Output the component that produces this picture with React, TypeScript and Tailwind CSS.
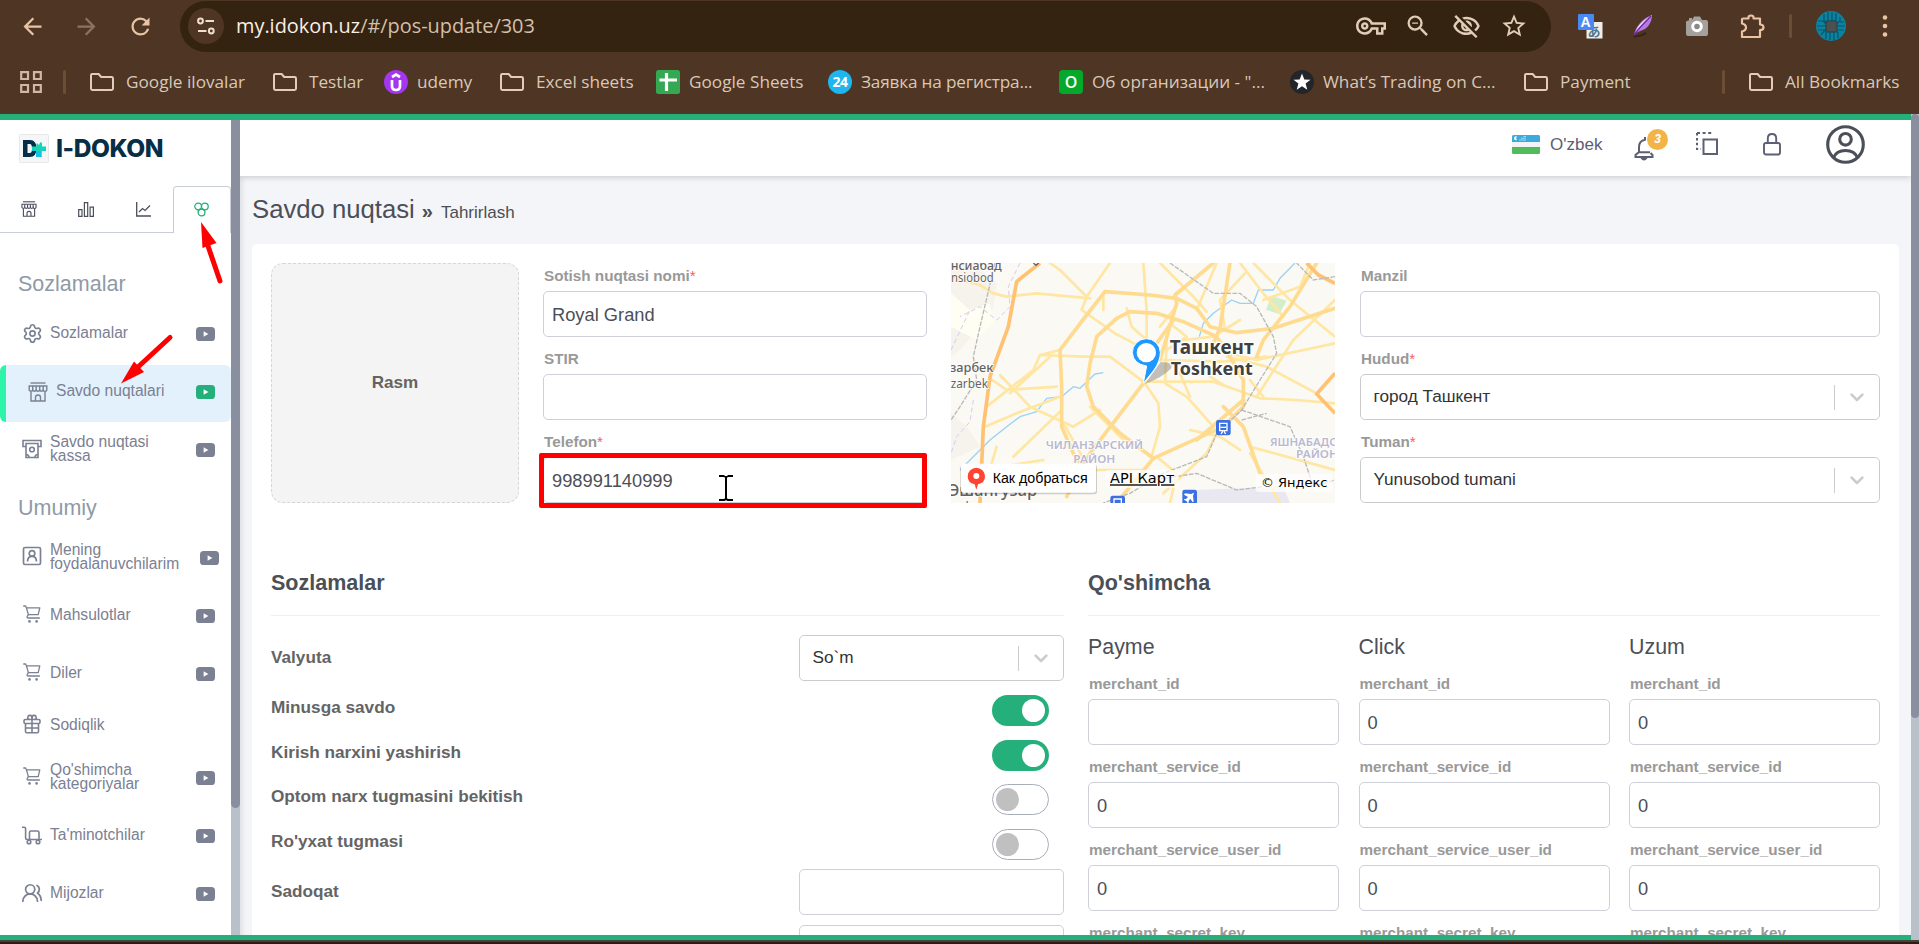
import type { ReactNode } from "react";
import { MdOutlineExtension, MdOutlineVpnKey, MdOutlineZoomOut, MdStarBorder, MdArrowBack, MdArrowForward, MdRefresh, MdOutlineVisibilityOff } from "react-icons/md";
import { Settings, UsersRound } from "lucide-react";

/* ---------- small drawings ---------- */

function StoreIcon({ className }: { className: string }) {
  return (
    <svg viewBox="0 0 20 20" fill="none" stroke="currentColor" strokeWidth="1.4" className={className}>
      <path d="M2.5 1H17.5" />
      <path d="M1.2 4H18.8V8.2a2 2 0 0 1-3.6 0a2 2 0 0 1-3.5 0a2 2 0 0 1-3.5 0a2 2 0 0 1-3.5 0a2 2 0 0 1-3.5 0Z" />
      <path d="M4.7 4v4.2M8.2 4v4.2M11.7 4v4.2M15.2 4v4.2" />
      <path d="M3 10v9H17v-9M7.5 19v-3.5a2.5 2.5 0 0 1 5 0V19" />
    </svg>
  );
}

function AtmIcon({ className }: { className: string }) {
  return (
    <svg viewBox="0 0 20 20" fill="none" stroke="currentColor" strokeWidth="1.6" className={className}>
      <path d="M4 7.5H1V1.5H19V7.5H16" />
      <path d="M4 4.5H16V18.5H4Z" />
      <circle cx="10" cy="10.5" r="2.3" />
      <path d="M4 15.5a3 3 0 0 1 3 3M16 15.5a3 3 0 0 0-3 3" />
    </svg>
  );
}

function CartIcon() {
  return (
    <svg viewBox="0 0 18 18" fill="none" stroke="currentColor" strokeWidth="1.3" strokeLinecap="round" strokeLinejoin="round" className="size-[18px] -translate-y-[2px]">
      <path d="M.7 1H2.6L3.4 2.8H16.8L15.2 9.6H5.4" />
      <path d="M3.4 2.800L5.400 9.600L4.200 11.400Q3.800 13 5.200 13H16.400" />
      <circle cx="6.500" cy="16.400" r="1.300" fill="currentColor" stroke="none" />
      <circle cx="13.600" cy="16.400" r="1.300" fill="currentColor" stroke="none" />
    </svg>
  );
}

function ContactIcon() {
  return (
    <svg viewBox="0 0 20 20" fill="none" stroke="currentColor" strokeWidth="1.700" className="size-5 -translate-y-[2px]">
      <rect x="1.500" y="1.500" width="17" height="17" rx="1.500" />
      <circle cx="10" cy="7.400" r="2.800" />
      <path d="M5.500 15.500Q5.700 10.400 10 10.400Q14.300 10.400 14.500 15.500" />
    </svg>
  );
}

function GiftIcon() {
  return (
    <svg viewBox="0 0 18 20" fill="none" stroke="currentColor" strokeWidth="1.600" strokeLinejoin="round" className="h-5 w-[18px] -translate-y-[2px]">
      <rect x="1" y="5.500" width="16" height="4" rx="1.200" />
      <path d="M2.500 9.500V17.500Q2.500 18.800 3.800 18.800H14.200Q15.500 18.800 15.500 17.500V9.500M9 3V18.800M2.500 14H15.500" />
      <path d="M9 5.500V3.500A2.100 2.100 0 1 0 6.400 5.500M9 3.500A2.100 2.100 0 1 1 11.600 5.500" />
    </svg>
  );
}

function TrolleyIcon() {
  return (
    <svg viewBox="0 0 20 19" fill="none" stroke="currentColor" strokeWidth="1.600" strokeLinejoin="round" className="h-[19px] w-5 -translate-y-[1px]">
      <path d="M0 1.200H2.200Q3.600 1.200 3.600 2.600V12Q3.600 13.500 5 13.500H20" />
      <path d="M7.500 13V6.500Q7.500 5 9 5H15.500Q17 5 17 6.500V13" />
      <circle cx="7" cy="16" r="1.800" />
      <circle cx="16" cy="16" r="1.800" />
    </svg>
  );
}

function PlayBadge({ active = false }: { active?: boolean }) {
  return (
    <svg viewBox="0 0 19 14" className={active ? "h-[14px] w-[19px] text-[#25b07b]" : "h-[14px] w-[19px] text-[#7b8092]"}>
      <rect width="19" height="14" rx="3.6" fill="currentColor" />
      <path d="M7.6 4.2L12.4 7L7.6 9.8Z" fill="#fff" />
    </svg>
  );
}

function FolderIcon() {
  return (
    <svg viewBox="0 0 24 18" fill="none" stroke="#e2cdb9" strokeWidth="2" strokeLinejoin="round" className="h-[18px] w-6 shrink-0">
      <path d="M1 2.2Q1 1 2.2 1H8.6L11.2 4H21.6Q23 4 23 5.4V15.6Q23 17 21.6 17H2.4Q1 17 1 15.6Z" />
    </svg>
  );
}

function Bookmark({ icon, label, box }: { icon: ReactNode; label: string; box: string }) {
  return (
    <div className={`flex shrink-0 items-center ${box}`}>
      {icon}
      <span className="whitespace-nowrap">{label}</span>
    </div>
  );
}

/* ---------- browser chrome ---------- */

function Browser() {
  return (
    <header className="h-[114px] shrink-0 border-b border-[#3f3c30] bg-[#4e3524] font-['Open_Sans','Noto_Sans',sans-serif]">
      <div className="flex h-[53px] items-center pb-px text-[#e9c4a4]">
        <MdArrowBack className="ml-[19px] size-[27px]" />
        <MdArrowForward className="ml-[27px] size-[27px] text-[#8d735f]" />
        <MdRefresh className="ml-[27px] size-[27px]" />
        <div className="ml-[26px] flex h-[51px] w-[1371px] items-center rounded-full bg-[#352311] pl-2 text-[#e2cdb9]">
          <div className="flex size-9 items-center justify-center rounded-full bg-[#4e3524]">
            <svg viewBox="0 0 18 18" fill="none" stroke="#f0dfd0" strokeWidth="2" className="size-[18px]">
              <circle cx="3.5" cy="4" r="2.4" />
              <path d="M8.5 4H17M1 14H9.5" />
              <circle cx="14.3" cy="14" r="2.4" />
            </svg>
          </div>
          <div className="ml-3 w-[1120px] whitespace-nowrap text-[19.900px] text-[#d3bfab]">
            <span className="text-[#fbeee2]">my.idokon.uz</span>/#/pos-update/303
          </div>
          <MdOutlineVpnKey className="size-[30px]" />
          <MdOutlineZoomOut className="ml-[18px] size-[28px]" />
          <MdOutlineVisibilityOff className="ml-[20px] size-[29px]" />
          <MdStarBorder className="ml-[19px] size-[28px]" />
        </div>
        <svg viewBox="0 0 25 25" className="ml-[27px] size-[25px]">
          <rect x="8.500" y="8" width="16" height="16.500" fill="#f1eee9" />
          <text x="9.500" y="21.500" fontSize="13" fill="#4d7790" fontWeight="700" fontFamily="Noto Sans CJK JP">あ</text>
          <rect width="16" height="16" rx="1" fill="#4a89f3" />
          <text x="2.600" y="13" fontSize="14" fontWeight="700" fill="#fff" fontFamily="Liberation Sans">A</text>
        </svg>
        <svg viewBox="0 0 21 24" className="ml-[30px] h-6 w-[21px]">
          <path d="M1 22Q2 23 9 21L13 19" stroke="#382418" strokeWidth="2" fill="none" />
          <path d="M1 21C2 14 8 5 19 1C19 8 15 15 7 17Q4 18 1 21Z" fill="#b77be0" />
          <path d="M1 21C5 16 11 9 19 1C14 4 5 10 3 17Z" fill="#efdcfa" />
          <path d="M1 21C5 15 10 10 18 2" stroke="#7125a5" strokeWidth="1.500" fill="none" />
        </svg>
        <svg viewBox="0 0 22 20" className="ml-[32px] h-5 w-[22px]">
          <path d="M2.500 4.500H3V2H6V4L8 0.500H14L16 4H20Q22 4 22 6V18Q22 20 20 20H2Q0 20 0 18V6Q0 4.500 2.500 4.500Z" fill="#a3a09d" />
          <circle cx="11" cy="10.500" r="4.300" fill="#8a8886" stroke="#fff" strokeWidth="3" />
        </svg>
        <svg viewBox="0 0 25 25" fill="none" stroke="currentColor" strokeWidth="2.200" strokeLinejoin="round" className="ml-[32px] size-[25px]">
          <path d="M3 4.500H8.500Q8 1.500 11 1.500Q14 1.500 13.500 4.500H20V10.500Q23.500 10.500 23.500 13.200Q23.500 16 20 16V23H2V17.500Q6 16.500 6 13.500Q6 10.500 2 9.500V5.500Q2 4.500 3 4.500Z" />
        </svg>
        <div className="ml-[24px] h-6 w-[3px] rounded bg-[#6c4e36]" />
        <svg viewBox="0 0 30 30" className="ml-[24px] size-[30px]">
          <circle cx="15" cy="15" r="15" fill="#0b82a0" />
          <g stroke="#07566b" strokeWidth="1.200" fill="none">
            <path d="M8 3V9L11 12M12 1V10M16 1V10M20 2V8L18 11M24 6V10L20 13M2 10H7L10 13M1 15H10M2 19H9M5 24L10 18M10 28V21M14 29V20M18 29V22L17 20M22 27V22L19 19M28 19H20M29 15H20M28 11H24" />
          </g>
          <rect x="10" y="10" width="11" height="11" rx="1" fill="#4c5051" stroke="#283f47" />
        </svg>
        <svg viewBox="0 0 6 24" fill="currentColor" className="ml-[36px] h-6 w-[6px]">
          <circle cx="3" cy="3.500" r="2.300" />
          <circle cx="3" cy="12" r="2.300" />
          <circle cx="3" cy="20.500" r="2.300" />
        </svg>
      </div>
      <div className="flex h-[58px] items-center pl-5 text-[17.200px] text-[#dac8b6]">
        <svg viewBox="0 0 22 22" fill="none" stroke="#cfb9a6" strokeWidth="2.200" className="mr-[21px] size-[22px]">
          <path d="M1.200 1.200H8V8H1.200ZM14 1.200H20.800V8H14ZM1.200 14H8V20.800H1.200ZM14 14H20.800V20.800H14Z" />
        </svg>
        <div className="mr-6 h-6 w-[3px] rounded bg-[#6c4e36]" />
        <Bookmark icon={<FolderIcon />} label="Google ilovalar" box="w-[183px] gap-3" />
        <Bookmark icon={<FolderIcon />} label="Testlar" box="w-[111px] gap-3" />
        <Bookmark
          icon={
            <svg viewBox="0 0 24 24" className="size-6">
              <circle cx="12" cy="12" r="12" fill="#a435f0" />
              <path d="M8 7L12 4.500L16 7M8 10V16Q8 20 12 20Q16 20 16 16V10" fill="none" stroke="#fff" strokeWidth="2.700" />
            </svg>
          }
          label="udemy"
          box="w-[116px] gap-[9px]"
        />
        <Bookmark icon={<FolderIcon />} label="Excel sheets" box="w-[156px] gap-3" />
        <Bookmark
          icon={
            <svg viewBox="0 0 24 24" className="size-6">
              <rect width="24" height="24" rx="2.500" fill="#34a853" />
              <path d="M3.500 10H21M10.500 3V21" stroke="#fff" strokeWidth="3.200" />
            </svg>
          }
          label="Google Sheets"
          box="w-[172px] gap-[9px]"
        />
        <Bookmark
          icon={<span className="flex size-6 items-center justify-center rounded-full bg-[#1fb6ef] text-[14px] font-bold tracking-[-0.5px] text-white">24</span>}
          label="Заявка на регистра..."
          box="w-[231px] gap-[9px] tracking-[-0.18px]"
        />
        <Bookmark
          icon={<span className="flex size-6 items-center justify-center rounded-[4px] bg-[#04a82a] text-[16px] font-semibold text-white">O</span>}
          label={'Об организации - "...'}
          box="w-[231px] gap-[9px]"
        />
        <Bookmark
          icon={
            <svg viewBox="0 0 24 24" className="size-6">
              <circle cx="12" cy="12" r="12" fill="#22252a" />
              <path d="M12 3.500L14.300 9.500L20.500 9.700L15.600 13.500L17.300 19.700L12 16.200L6.700 19.700L8.400 13.500L3.500 9.700L9.700 9.500Z" fill="#fff" />
            </svg>
          }
          label="What’s Trading on C..."
          box="w-[234px] gap-[9px]"
        />
        <Bookmark icon={<FolderIcon />} label="Payment" box="w-[198px] gap-3" />
        <div className="mr-6 h-6 w-[3px] rounded bg-[#6c4e36]" />
        <Bookmark icon={<FolderIcon />} label="All Bookmarks" box="gap-3" />
      </div>
    </header>
  );
}

/* ---------- sidebar ---------- */

function NavItem({ icon, label, gap, play = true, wide = false }: { icon: ReactNode; label: ReactNode; gap: string; play?: boolean; wide?: boolean }) {
  return (
    <div className={`flex h-11 shrink-0 items-center pl-[22px] text-[#7b8092] ${gap}`}>
      <span className="flex w-[20px] shrink-0 justify-center">{icon}</span>
      <span className={wide ? "ml-2 w-[150px] -translate-y-px leading-[14px]" : "ml-2 w-[146px] -translate-y-px leading-[14px]"}>{label}</span>
      {play && <PlayBadge />}
    </div>
  );
}

function Sidebar() {
  return (
    <aside className="flex w-[231px] shrink-0 flex-col bg-white text-[15.600px]">
      <div className="flex h-[66px] shrink-0 items-center pb-[10px] pl-[19px]">
        <svg viewBox="0 0 30 29" className="h-[29px] w-[30px]">
          <rect x="0.500" y="0.500" width="29" height="28" rx="1" fill="#f5f6f7" stroke="#e6e8ea" />
          <path d="M4 6H11Q17.500 6 17.500 14.500Q17.500 23 11 23H4ZM8.500 10V19H11Q13 19 13 14.500Q13 10 11 10Z" fill="#062e46" fillRule="evenodd" />
          <path d="M17.500 9.500H18.500L20 11L21.500 8L23 9V12.500H27V17H22.500V23H17V17H13V12.500H17.500Z" fill="#13d6b6" />
          <path d="M13 15L17 17H22.500V23H17V17H13Z" fill="#18bfe0" />
        </svg>
        <span className="ml-[7px] font-['Inter',sans-serif] text-[24.500px] font-extrabold tracking-[-0.4px] text-[#062e46]">I-DOKON</span>
      </div>
      <div className="flex h-[47px] shrink-0 text-[#4b4f5c]">
        <div className="flex flex-1 items-center border-b border-[#c9cdd6] pl-[21px]">
          <StoreIcon className="size-[16px]" />
          <svg viewBox="0 0 16 15" fill="none" stroke="currentColor" strokeWidth="1.200" className="ml-[41px] h-[15px] w-4">
            <path d="M.7 7.700H4V14.400H.7ZM6.400 .6H9.700V14.400H6.400ZM12.100 5.200H15.400V14.400H12.100Z" />
          </svg>
          <svg viewBox="0 0 15 15" fill="none" stroke="currentColor" strokeWidth="1.300" className="ml-[42px] size-[15px]">
            <path d="M.7 0V14H15M3 10L6.500 6.500L9 8.500L14 3.500" />
          </svg>
        </div>
        <div className="flex w-[58px] items-center justify-center rounded-t-[4px] border border-b-0 border-[#c9cdd6] pr-[2px] pb-[2px]">
          <svg viewBox="0 0 15 15" fill="none" stroke="#25b07b" strokeWidth="1.300" className="size-[15px]">
            <circle cx="4.200" cy="4.500" r="3.400" />
            <circle cx="10.800" cy="4.500" r="3.400" />
            <circle cx="7.500" cy="10.400" r="3.400" />
          </svg>
        </div>
      </div>
      <h2 className="mt-[23px] flex h-[56px] shrink-0 items-center pl-[18px] text-[21.500px] text-[#8f9aa7]">Sozlamalar</h2>
      <NavItem gap="" icon={<Settings strokeWidth={1.900} className="size-[21px] shrink-0 -translate-y-px" />} label="Sozlamalar" />
      <div className="mt-[9px] flex h-[57px] shrink-0 items-center rounded-[6px] border-l-[6px] border-[#2cf5a9] bg-[#e3f1fc] pb-[3px] pl-[22px] text-[#7b8092]">
        <StoreIcon className="size-5" />
        <span className="ml-[8px] w-[140px] -translate-y-px">Savdo nuqtalari</span>
        <PlayBadge active />
      </div>
      <NavItem gap="mt-[6px]" icon={<AtmIcon className="size-5 -translate-y-[1px]" />} label={<>Savdo nuqtasi<br />kassa</>} />
      <h2 className="mt-[14px] flex h-[44px] shrink-0 items-center pl-[18px] text-[21.500px] text-[#8f9aa7]">Umumiy</h2>
      <NavItem gap="mt-[6px]" wide icon={<ContactIcon />} label={<>Mening<br />foydalanuvchilarim</>} />
      <NavItem gap="mt-[14px]" icon={<CartIcon />} label="Mahsulotlar" />
      <NavItem gap="mt-[14px]" icon={<CartIcon />} label="Diler" />
      <NavItem gap="mt-[8px]" play={false} icon={<GiftIcon />} label="Sodiqlik" />
      <NavItem gap="mt-[8px]" icon={<CartIcon />} label={<>Qo'shimcha<br />kategoriyalar</>} />
      <NavItem gap="mt-[14px]" icon={<TrolleyIcon />} label="Ta'minotchilar" />
      <NavItem gap="mt-[14px]" icon={<UsersRound strokeWidth={1.900} className="size-[22px] shrink-0 -translate-y-px" />} label="Mijozlar" />
    </aside>
  );
}

/* ---------- form pieces ---------- */

function Label({ text, required = false }: { text: string; required?: boolean }) {
  return (
    <div className="flex h-[28px] items-center pl-px text-[15.250px] font-bold text-[#999999]">
      <span className="-mt-[2px]">
        {text}
        {required && <span className="font-normal text-[#f5605f]">*</span>}
      </span>
    </div>
  );
}

function Input({ value = "" }: { value?: string }) {
  return <div className="flex h-[46px] items-center rounded-[5px] border border-[#cdd0d9] bg-white px-2 pt-[2px] text-[18.300px] text-[#4b4f57]">{value}</div>;
}

function Select({ value }: { value: string }) {
  return (
    <div className="flex h-[46px] items-center rounded-[5px] border border-[#cccccc] bg-white pl-[12.500px] text-[17.200px] text-[#333333]">
      <span className="flex-1">{value}</span>
      <span className="h-[25px] w-px bg-[#cccccc]" />
      <svg viewBox="0 0 14 9" fill="none" stroke="#cccccc" strokeWidth="2.600" strokeLinecap="round" strokeLinejoin="round" className="mr-[15px] ml-[15px] h-[9px] w-[14px]">
        <path d="M1.600 1.600L7 7L12.400 1.600" />
      </svg>
    </div>
  );
}

function Toggle({ on = false }: { on?: boolean }) {
  return on ? (
    <span className="mr-[15px] flex h-[31px] w-[57px] items-center justify-end rounded-full bg-[#25b07b] pr-1">
      <span className="size-[23px] rounded-full bg-white" />
    </span>
  ) : (
    <span className="mr-[15px] flex h-[31px] w-[57px] items-center rounded-full border border-[#a7adb9] bg-white pl-[3px]">
      <span className="size-[23px] rounded-full bg-[#c0c0c0]" />
    </span>
  );
}

function SettingRow({ label, height, raise = "-mt-[5px]", children }: { label: string; height: string; raise?: string; children: ReactNode }) {
  return (
    <div className={`flex items-center justify-between ${height}`}>
      <span className={`text-[17.200px] font-bold text-[#646464] ${raise}`}>{label}</span>
      {children}
    </div>
  );
}

function Merchant({ name, first }: { name: string; first: string }) {
  return (
    <div className="min-w-0 flex-1">
      <h3 className="flex h-[54px] items-center pt-px text-[21.400px] text-[#4b4f57]">{name}</h3>
      <div className="-mt-[3px] space-y-[9px]">
        <div><Label text="merchant_id" /><Input value={first} /></div>
        <div><Label text="merchant_service_id" /><Input value="0" /></div>
        <div><Label text="merchant_service_user_id" /><Input value="0" /></div>
        <div><Label text="merchant_secret_key" /></div>
      </div>
    </div>
  );
}

/* City map: streets, rivers, railways and place names */
function CityMap() {
  return (
    <svg viewBox="63 69 1152 720" className="h-60 w-96 bg-[#fbf9f2]" fontFamily="Noto Sans">
      <rect x="63" y="69" width="1152" height="720" fill="#fbf9f3" />
      <path d="M63 69H130L200 130L190 200L150 260L90 330L63 350ZM63 520L110 560L150 620L63 660Z" fill="#f6f2ec" />
      <path d="M63 160L120 210L180 190L190 250L140 300L63 260Z" fill="#fffef2" />
      <path d="M800 750L1060 740L1080 789H790Z" fill="#e9e8f1" />
      <path d="M1024 168L1070 182L1048 222L1008 210Z" fill="#d4efc7" />
      <g fill="none" stroke="#d3cdf2" strokeWidth="3" strokeDasharray="14 9">
        <path d="M270 69L235 140L240 200L200 240L150 200L90 230M63 330L120 210M130 480L120 545L80 590L63 640" />
      </g>
      <g fill="none" stroke="#97d2f7" strokeWidth="4" strokeLinejoin="round">
        <path d="M1095 69L1050 115L1030 150L985 150L970 190L930 190L905 180L850 220L820 250L808 290" />
        <path d="M520 398L495 402L450 445L430 440L395 470L350 475L320 515L270 530L230 560L180 600L120 660L90 690" />
      </g>
      <g fill="none" stroke="#ffe6a3" strokeWidth="8" strokeLinejoin="round" strokeLinecap="round">
        <path d="M470 170L455 210L555 280L640 325M590 205L605 260L650 300M520 158L520 210" />
        <path d="M640 69L650 215L650 300M730 210L690 260M690 69L790 170L830 215" />
        <path d="M540 69L470 170M390 90L470 170M360 69L390 90M860 69L800 210M945 100L870 180L885 270" />
        <path d="M230 170L320 160L480 175M190 160L230 170M63 110L150 135L190 160" />
        <path d="M165 560L260 520L390 470M210 405L300 500L430 560M240 460L360 350M170 500L310 390L330 345L460 350M180 415L230 450L380 440" />
        <path d="M330 345L390 330M460 350L540 350L640 425M650 425L850 425L990 475L1100 480L1215 490M645 430L685 490L690 560L665 650" />
        <path d="M810 320L980 360L1215 310M890 350L1010 380L1160 460M710 300L705 430L770 470L850 560" />
        <path d="M720 250L770 290L710 330M760 300L850 290L930 240M1000 180L1110 140L1140 69M930 69L1000 160L1060 230M970 69L1080 180L1215 290" />
        <path d="M1215 180L1090 300L980 470M700 360L880 365L1010 350M840 410L880 435M430 560L510 510M400 550L480 690L640 690" />
        <path d="M780 570L870 590L930 630M870 560L830 640L700 760M150 690L340 660M250 650L395 510M200 620L170 720" />
        <path d="M680 650L740 700L720 789M960 620L1215 690M1050 789L960 640M1000 470L960 420M480 500L600 620M780 470L750 400" />
      </g>
      <g fill="none" stroke="#ffdb8f" strokeWidth="11" strokeLinejoin="round" strokeLinecap="round">
        <path d="M525 155L660 165L740 175L800 205L840 260L920 278L1030 265L1215 205" />
        <path d="M525 155L470 225L390 330L395 440L395 560L430 640L480 710" />
        <path d="M690 360L740 190L735 165L850 69M560 235L600 215L680 220L760 245L860 290L900 350L940 420L940 500L880 560L670 655" />
        <path d="M560 235L500 290L480 370L470 440L490 500L570 580L670 655" />
        <path d="M730 240L680 310M640 430L480 640L410 770M670 655L560 789M900 69L870 265M870 265L850 310M940 480L800 600M880 500L940 560L990 700" />
        <path d="M980 350L1000 300L1080 200L1160 69" />
      </g>
      <g fill="none" stroke="#ffc273" strokeWidth="11" strokeLinejoin="round">
        <path d="M330 69L260 125L235 260L180 410L160 560L150 789" />
        <path d="M1130 69L1165 105L1215 130M1215 400L1160 462L1215 520" />
      </g>
      <g fill="none" stroke="#b9b9b9" strokeWidth="4" strokeDasharray="14 4">
        <path d="M195 69L150 260L130 350L140 420L90 500L63 540" />
        <path d="M720 69L850 160L930 160L980 200L1030 290L1040 340L990 420L935 510L860 580L830 650L700 700L600 760L520 789M1215 110L1150 120L1100 69M935 510L1080 560L1120 650L1150 740L1215 720M935 540L1010 520M670 720L800 700L920 750L1000 740" />
      </g>
      <g fontWeight="600" fill="#b8b8d0" fontSize="32" stroke="#fff" strokeWidth="4" paintOrder="stroke">
        <text x="347" y="628" textLength="292" lengthAdjust="spacingAndGlyphs">ЧИЛАНЗАРСКИЙ</text>
        <text x="430" y="668" textLength="126" lengthAdjust="spacingAndGlyphs">РАЙОН</text>
        <text x="1020" y="618" textLength="222" lengthAdjust="spacingAndGlyphs">ЯШНАБАДСК</text>
        <text x="1098" y="655" textLength="126" lengthAdjust="spacingAndGlyphs">РАЙОН</text>
      </g>
      <g fill="#636363" fontSize="36" stroke="#fff" strokeWidth="4" paintOrder="stroke">
        <text x="62" y="90" textLength="153" lengthAdjust="spacingAndGlyphs" fontWeight="500">нсиабад</text>
        <text x="63" y="127" textLength="128" lengthAdjust="spacingAndGlyphs">nsiobod</text>
        <text x="60" y="397" textLength="130" lengthAdjust="spacingAndGlyphs" fontWeight="500">зарбек</text>
        <text x="62" y="443" textLength="112" lengthAdjust="spacingAndGlyphs">zarbek</text>
        <text x="56" y="768" textLength="265" lengthAdjust="spacingAndGlyphs" fontSize="48" fontWeight="500">Эшангузар</text>
        <text x="88" y="814" fontSize="38">shonguzar</text>
      </g>
      <path d="M310 69L318 76L326 69" fill="none" stroke="#666" strokeWidth="4" />
      <path d="M645 432L692 366Q735 366 722 386Q700 410 645 432Z" fill="#777" opacity="0.45" />
      <path d="M640 430L650 378Q610 372 607 338A42 42 0 0 1 691 338Q691 362 672 390Z" fill="#1e98ff" stroke="#fff" strokeWidth="3" />
      <circle cx="649" cy="338" r="29" fill="#fff" />
      <g fill="#404040" fontWeight="700" fontSize="59" stroke="#fff" strokeWidth="7" paintOrder="stroke" strokeLinejoin="round">
        <text x="719" y="341" textLength="252" lengthAdjust="spacingAndGlyphs">Ташкент</text>
        <text x="722" y="404" fontSize="54" textLength="246" lengthAdjust="spacingAndGlyphs">Toshkent</text>
      </g>
      <g>
        <rect x="858" y="540" width="44" height="46" rx="7" fill="#3c70e2" />
        <path d="M869 550H891V572H869ZM873 582L878 574M887 582L882 574" stroke="#fff" strokeWidth="4" fill="none" />
        <path d="M871 562H889" stroke="#fff" strokeWidth="4" />
        <rect x="541" y="767" width="44" height="46" rx="7" fill="#3c70e2" />
        <path d="M552 777H574V799H552Z" stroke="#fff" strokeWidth="4" fill="none" />
        <rect x="757" y="749" width="44" height="44" rx="7" fill="#3c70e2" />
        <path d="M792 758L783 762L765 760L762 764L774 771L768 777L763 777L762 779L769 783L773 789L776 788L776 783L781 776L788 787L791 784L789 768Z" fill="#fff" />
      </g>
      <rect x="91" y="674" width="410" height="89" rx="9" fill="#000" opacity="0.18" />
      <rect x="93" y="671" width="405" height="87" rx="8" fill="#fff" />
      <path d="M139 749L134 733Q113 729 113 709A26 26 0 0 1 165 709Q165 729 144 733Z" fill="#ff4433" />
      <circle cx="139" cy="708" r="9" fill="#fff" />
      <text x="188" y="730" fontSize="42" textLength="285" lengthAdjust="spacingAndGlyphs" fontFamily="Liberation Sans" fill="#000">Как добраться</text>
      <rect x="526" y="690" width="220" height="54" rx="8" fill="#fff" opacity="0.7" />
      <text x="540" y="730" fontSize="40" textLength="193" lengthAdjust="spacingAndGlyphs" fontFamily="DejaVu Sans" fill="#000" textDecoration="underline">API Карт</text>
      <rect x="977" y="702" width="230" height="54" rx="8" fill="#fff" opacity="0.7" />
      <text x="993" y="741" fontSize="37" textLength="199" lengthAdjust="spacingAndGlyphs" fontFamily="DejaVu Sans" fill="#000">© Яндекс</text>
    </svg>
  );
}

/* ---------- main area ---------- */

function TopBar() {
  return (
    <div className="z-10 flex h-14 shrink-0 items-center bg-white pb-[7px] pl-[1272px] text-[#5c6072] shadow-[0_1px_6px_rgba(60,60,80,0.25)]">
      <svg viewBox="0 0 28 19" className="h-[19px] w-7">
        <rect width="28" height="19" rx="1.500" fill="#f3f2f6" />
        <path d="M0 6V1.500Q0 0 1.500 0H26.500Q28 0 28 1.500V6Z" fill="#3aabdc" />
        <path d="M0 13H28V17.500Q28 19 26.500 19H1.500Q0 19 0 17.500Z" fill="#52bb5c" />
        <path d="M0 6.500H28M0 12.500H28" stroke="#d66c72" />
        <path d="M5 1.500A2 2 0 1 0 5 5A2.600 2.600 0 0 1 5 1.500Z" fill="#fff" />
        <path d="M11.500 1.500H14M9 3.200H14M7 5H14" stroke="#a9dff2" strokeWidth="0.900" />
      </svg>
      <span className="ml-[10px] w-[84px] text-[17px]">O'zbek</span>
      <div className="relative h-7 w-6 translate-y-[5px]">
        <svg viewBox="0 0 20 24" fill="none" stroke="currentColor" strokeWidth="2" className="h-6 w-5 translate-y-px">
          <path d="M11 0V2.800Q5 4 5 10V15L1.500 18V20H18.500V18L16.500 16M4.500 15.300H16" />
          <path d="M6 20.500Q10 26.500 14 20.500Z" fill="currentColor" stroke="none" />
        </svg>
        <span className="absolute -top-[7px] left-[13px] flex size-[21px] items-center justify-center rounded-full bg-[#f2b347] text-[12px] font-bold text-white italic">3</span>
      </div>
      <svg viewBox="0 0 22 23" fill="none" stroke="currentColor" strokeWidth="2" className="ml-[38px] h-[23px] w-[22px] -translate-y-px">
        <path d="M7.500 7.500H21V22H7.500Z" />
        <path d="M1 1H16" strokeDasharray="3 2.600" />
        <path d="M1 1V17H5" strokeDasharray="2.500 2.400" />
      </svg>
      <svg viewBox="0 0 18 23" fill="none" stroke="currentColor" strokeWidth="1.900" className="ml-[45px] h-[23px] w-[18px]">
        <rect x="1" y="10" width="16" height="11.500" rx="2" />
        <path d="M4.800 10V5.500Q4.800 1 9 1Q13.200 1 13.200 5.500V10" />
      </svg>
      <svg viewBox="0 0 39 39" fill="none" stroke="#4a4f59" strokeWidth="3.100" className="ml-[45px] size-[39px]">
        <circle cx="19.500" cy="19.500" r="17.800" />
        <circle cx="19.500" cy="14.300" r="5.800" />
        <path d="M7.500 32.500Q10.500 25.500 19.500 25.500Q28.500 25.500 31.500 32.500" />
      </svg>
    </div>
  );
}

function Main() {
  return (
    <main className="flex w-[1671px] shrink-0 flex-col overflow-hidden bg-[#f4f5f8] shadow-[inset_5px_0_5px_-3px_rgba(60,60,80,0.12)]">
      <TopBar />
      <h1 className="flex h-[68px] shrink-0 items-baseline pt-[14px] pl-[12px] text-[25.700px] text-[#4b4f57]">
        Savdo nuqtasi
        <span className="ml-[7px] text-[20px] font-bold">»</span>
        <span className="ml-[8px] text-[17px]">Tahrirlash</span>
      </h1>
      <section className="ml-[12px] h-[720px] w-[1647px] shrink-0 rounded-[5px] bg-white px-[19px] pt-[19px]">
        <div className="flex h-[240px]">
          <div className="flex w-[248px] items-center justify-center rounded-[12px] border border-dashed border-[#d6d6d6] bg-[#f4f4f4] text-[17.100px] font-bold text-[#646464]">
            Rasm
          </div>
          <div className="ml-[24px] w-[384px] space-y-[9px]">
            <div><Label text="Sotish nuqtasi nomi" required /><Input value="Royal Grand" /></div>
            <div><Label text="STIR" /><Input /></div>
            <div className="relative">
              <Label text="Telefon" required />
              <Input value="998991140999" />
              <div className="absolute top-[24px] right-0 -left-[4px] h-[55px] rounded-[2px] border-[5px] border-[#ff0000]" />
              <svg viewBox="0 0 14 26" stroke="#000" strokeWidth="2" className="absolute top-[46px] left-[176px] h-[26px] w-[14px]">
                <path d="M0 1H5.500M8.500 1H14M7 1V25M0 25H5.500M8.500 25H14M5 1L7 2L9 1M5 25L7 24L9 25" fill="none" />
              </svg>
            </div>
          </div>
          <div className="ml-6"><CityMap /></div>
          <div className="ml-[25px] w-[520px] space-y-[9px]">
            <div><Label text="Manzil" /><Input /></div>
            <div><Label text="Hudud" required /><Select value="город Ташкент" /></div>
            <div><Label text="Tuman" required /><Select value="Yunusobod tumani" /></div>
          </div>
        </div>
        <div className="mt-[48px] flex gap-6">
          <div className="w-[793px]">
            <h2 className="flex h-[65px] items-center border-b border-[#eeeff1] text-[21.500px] font-bold text-[#4b4f57]">Sozlamalar</h2>
            <div className="pt-[16px]">
              <SettingRow label="Valyuta" height="h-[52px]" raise="mt-0">
                <div className="w-[265px]"><Select value="So`m" /></div>
              </SettingRow>
              <div className="pt-[4px]">
                <SettingRow label="Minusga savdo" height="h-[45px]" raise="-mt-[6px]"><Toggle on /></SettingRow>
                <SettingRow label="Kirish narxini yashirish" height="h-[44px]"><Toggle on /></SettingRow>
                <SettingRow label="Optom narx tugmasini bekitish" height="h-[45px]"><Toggle /></SettingRow>
                <SettingRow label="Ro'yxat tugmasi" height="h-[45px]" raise="-mt-[6px]"><Toggle /></SettingRow>
              </div>
              <SettingRow label="Sadoqat" height="h-[50px]" raise="mt-0">
                <div className="w-[265px]"><Input /></div>
              </SettingRow>
              <div className="mt-[8px] ml-[528px] w-[265px]"><Input /></div>
            </div>
          </div>
          <div className="w-[792px]">
            <h2 className="flex h-[65px] items-center border-b border-[#eeeff1] text-[21.500px] font-bold text-[#4b4f57]">Qo'shimcha</h2>
            <div className="mt-[4px] flex gap-[19.500px]">
              <Merchant name="Payme" first="" />
              <Merchant name="Click" first="0" />
              <Merchant name="Uzum" first="0" />
            </div>
          </div>
        </div>
      </section>
    </main>
  );
}

export default function App() {
  return (
    <div className="relative flex h-[944px] w-[1919px] flex-col overflow-hidden bg-[#2c1c12] font-['Liberation_Sans',Arial,sans-serif]">
      <Browser />
      <div className="flex h-[826px] shrink-0">
        <div className="flex w-[1911px] shrink-0 flex-col">
          <div className="h-[6px] shrink-0 bg-[#25b07b]" />
          <div className="flex h-[815px] shrink-0 overflow-hidden bg-white">
            <Sidebar />
            <div className="h-full w-[9px] shrink-0 bg-[#b8c1c9]">
              <div className="h-[688px] rounded-b-full bg-[#8a8fa0]" />
            </div>
            <Main />
          </div>
          <div className="h-[5px] shrink-0 bg-[#25b07b]" />
        </div>
        <div className="flex-1 bg-[#b8c1c9]">
          <div className="h-[604px] rounded-full bg-[#8a8fa0]" />
        </div>
      </div>
      <div className="h-[2px] shrink-0 bg-[#44423c]" />
      <svg viewBox="0 0 120 170" className="pointer-events-none absolute top-[220px] left-[116px] h-[170px] w-[120px]">
        <path d="M104 61L92 26" stroke="#ff0000" strokeWidth="5" strokeLinecap="round" />
        <path d="M85 2L100.500 23L86.500 28Z" fill="#ff0000" />
        <path d="M54 117.500L22 147" stroke="#ff0000" strokeWidth="5" strokeLinecap="round" />
        <path d="M5 163.500L18 141.500L28 152Z" fill="#ff0000" />
      </svg>
    </div>
  );
}
